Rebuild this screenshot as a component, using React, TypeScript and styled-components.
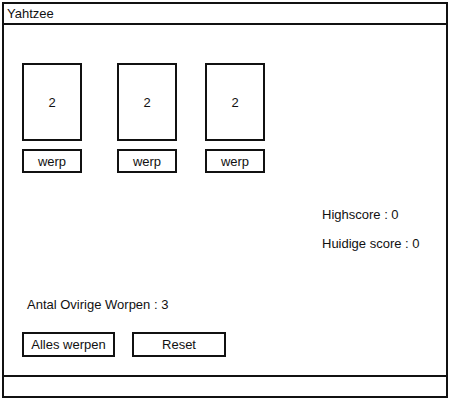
import React from "react";
import styled, { createGlobalStyle } from "styled-components";

const GlobalStyle = createGlobalStyle`
  html, body { margin: 0; padding: 0; background: #fff; }
  body { font-family: "Liberation Sans", Arial, sans-serif; color: #111; }
`;

const Window = styled.div`
  box-sizing: border-box;
  margin: 2px 0 0 2px;
  width: 446px;
  height: 396px;
  border: 2px solid #111;
  display: flex;
  flex-direction: column;
  background: #fff;
`;

const TitleBar = styled.div`
  height: 19px;
  line-height: 19px;
  padding-left: 3px;
  font-size: 13px;
  border-bottom: 2px solid #111;
  flex: none;
`;

const Content = styled.div`
  flex: 1;
  padding: 38px 0 0 18px;
  display: flex;
  flex-direction: column;
  align-items: flex-start;
`;

const DiceRow = styled.div`
  display: grid;
  grid-template-columns: 95px 88px 60px;
`;

const DieColumn = styled.div`
  display: flex;
  flex-direction: column;
  width: 60px;
`;

const Die = styled.div`
  box-sizing: border-box;
  width: 60px;
  height: 78px;
  border: 2px solid #111;
  display: flex;
  align-items: center;
  justify-content: center;
  font-size: 13px;
`;

const SmallButton = styled.button`
  box-sizing: border-box;
  margin-top: 8px;
  width: 60px;
  height: 24px;
  padding: 0;
  border: 2px solid #111;
  background: #fff;
  font-family: "Liberation Sans", Arial, sans-serif;
  font-size: 13px;
  color: #111;
`;

const ScoreBlock = styled.div`
  margin: 34px 0 0 300px;
  display: flex;
  flex-direction: column;
  gap: 13px;
`;

const Label = styled.div`
  font-size: 13px;
  line-height: 16px;
`;

const Remaining = styled(Label)`
  margin: 45px 0 0 5px;
`;

const ButtonRow = styled.div`
  margin-top: 19px;
  display: flex;
  gap: 17px;
`;

const ActionButton = styled.button<{ $w: number }>`
  box-sizing: border-box;
  width: ${(p) => p.$w}px;
  height: 25px;
  padding: 0;
  border: 2px solid #111;
  background: #fff;
  font-family: "Liberation Sans", Arial, sans-serif;
  font-size: 13px;
  color: #111;
`;

const StatusBar = styled.div`
  flex: none;
  height: 19px;
  border-top: 2px solid #111;
`;

const dice = [2, 2, 2];

export default function App() {
  return (
    <>
      <GlobalStyle />
      <Window>
        <TitleBar>Yahtzee</TitleBar>
        <Content>
          <DiceRow>
            {dice.map((d, i) => (
              <DieColumn key={i}>
                <Die>{d}</Die>
                <SmallButton>werp</SmallButton>
              </DieColumn>
            ))}
          </DiceRow>
          <ScoreBlock>
            <Label>Highscore : 0</Label>
            <Label>Huidige score : 0</Label>
          </ScoreBlock>
          <Remaining>Antal Ovirige Worpen : 3</Remaining>
          <ButtonRow>
            <ActionButton $w={93}>Alles werpen</ActionButton>
            <ActionButton $w={94}>Reset</ActionButton>
          </ButtonRow>
        </Content>
        <StatusBar />
      </Window>
    </>
  );
}
